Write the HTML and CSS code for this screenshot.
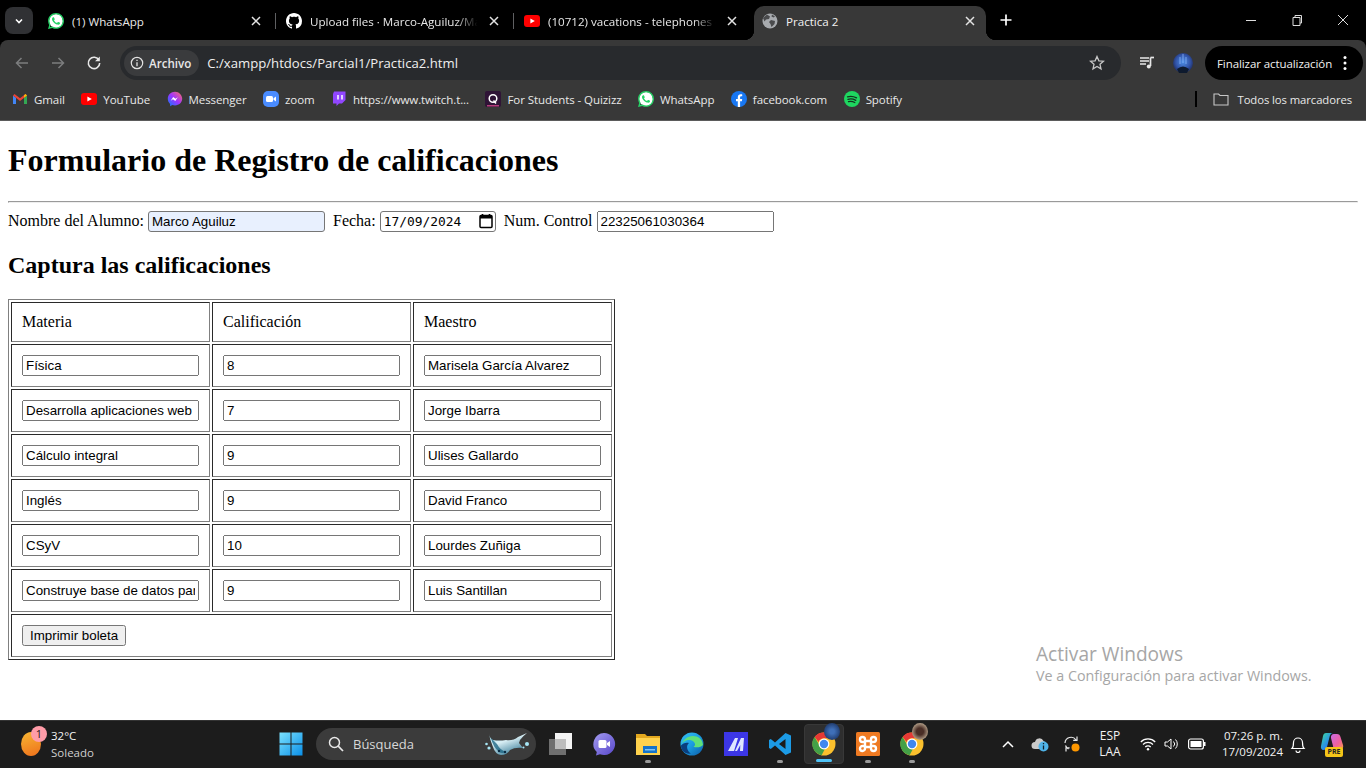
FILE: index.html
```html
<!DOCTYPE html>
<html lang="es">
<head>
<meta charset="utf-8">
<title>Practica 2</title>
<link rel="stylesheet" href="styles.css">
</head>
<body>
<svg class="defs" aria-hidden="true">
  <symbol id="wa" viewBox="0 0 24 24"><circle cx="12" cy="12" r="10.5" fill="#fff"/><path fill="#25d366" d="M17.472 14.382c-.297-.149-1.758-.867-2.03-.967-.273-.099-.471-.148-.67.15-.197.297-.767.966-.94 1.164-.173.199-.347.223-.644.075-.297-.15-1.255-.463-2.39-1.475-.883-.788-1.48-1.761-1.653-2.059-.173-.297-.018-.458.13-.606.134-.133.298-.347.446-.52.149-.174.198-.298.298-.497.099-.198.05-.371-.025-.52-.075-.149-.669-1.612-.916-2.207-.242-.579-.487-.5-.669-.51-.173-.008-.371-.01-.57-.01-.198 0-.52.074-.792.372-.272.297-1.04 1.016-1.04 2.479 0 1.462 1.065 2.875 1.213 3.074.149.198 2.096 3.2 5.077 4.487.709.306 1.262.489 1.694.625.712.227 1.36.195 1.871.118.571-.085 1.758-.719 2.006-1.413.248-.694.248-1.289.173-1.413-.074-.124-.272-.198-.57-.347m-5.421 7.403h-.004a9.87 9.87 0 01-5.031-1.378l-.361-.214-3.741.982.998-3.648-.235-.374a9.86 9.86 0 01-1.51-5.26c.001-5.45 4.436-9.885 9.888-9.885 2.64 0 5.122 1.03 6.988 2.898a9.825 9.825 0 012.893 6.994c-.003 5.45-4.437 9.884-9.885 9.884m8.413-18.297A11.815 11.815 0 0012.05 0C5.495 0 .16 5.335.157 11.892c0 2.096.547 4.142 1.588 5.945L.057 24l6.305-1.654a11.882 11.882 0 005.683 1.448h.005c6.554 0 11.89-5.335 11.893-11.893a11.821 11.821 0 00-3.48-8.413z"/></symbol>
  <symbol id="yt" viewBox="0 0 16 16"><rect x="0" y="2" width="16" height="12" rx="3" fill="#f00"/><path d="M6.4 5.4v5.2L10.8 8z" fill="#fff"/></symbol>
  <symbol id="close" viewBox="0 0 10 10"><path d="M1 1l8 8M9 1l-8 8" stroke="#e3e3e3" stroke-width="1.5" fill="none"/></symbol>
  <symbol id="chrome" viewBox="0 0 24 24">
    <circle cx="12" cy="12" r="11.5" fill="#fbc02d"/>
    <path d="M12 .5a11.5 11.5 0 0 1 9.96 5.75H12a5.75 5.75 0 0 0-5.4 3.7L2.6 4.9A11.5 11.5 0 0 1 12 .5z" fill="#e53935"/>
    <path d="M2.6 4.9l5 8.6a5 5 0 0 0 5.4 3.3l-3.4 6.4A11.5 11.5 0 0 1 2.6 4.9z" fill="#43a047"/>
    <circle cx="12" cy="12" r="5.4" fill="#fff"/><circle cx="12" cy="12" r="4.2" fill="#3f87ee"/>
  </symbol>
</svg>

<div class="browser">
  <div class="tabstrip">
    <div class="tabmenu"><svg class="ico10" viewBox="0 0 10 10"><path d="M2 3.5l3 3 3-3" stroke="#fff" stroke-width="1.6" fill="none"/></svg></div>
    <div class="tab">
      <svg class="fav"><use href="#wa"/></svg>
      <span class="tab-title">(1) WhatsApp</span>
      <svg class="tab-close"><use href="#close"/></svg>
      <i class="tab-sep"></i>
    </div>
    <div class="tab">
      <svg class="fav" viewBox="0 0 16 16"><path fill="#fff" d="M8 0C3.58 0 0 3.58 0 8c0 3.54 2.29 6.53 5.47 7.59.4.07.55-.17.55-.38 0-.19-.01-.82-.01-1.49-2.01.37-2.53-.49-2.69-.94-.09-.23-.48-.94-.82-1.13-.28-.15-.68-.52-.01-.53.63-.01 1.08.58 1.23.82.72 1.21 1.87.87 2.33.66.07-.52.28-.87.51-1.07-1.78-.2-3.64-.89-3.64-3.95 0-.87.31-1.59.82-2.15-.08-.2-.36-1.02.08-2.12 0 0 .67-.21 2.2.82.64-.18 1.32-.27 2-.27.68 0 1.36.09 2 .27 1.53-1.04 2.2-.82 2.2-.82.44 1.1.16 1.92.08 2.12.51.56.82 1.27.82 2.15 0 3.07-1.87 3.75-3.65 3.95.29.25.54.73.54 1.48 0 1.07-.01 1.93-.01 2.2 0 .21.15.46.55.38A8.013 8.013 0 0016 8c0-4.42-3.58-8-8-8z"/></svg>
      <span class="tab-title fade">Upload files · Marco-Aguiluz/Marco-Aguiluz</span>
      <svg class="tab-close"><use href="#close"/></svg>
      <i class="tab-sep"></i>
    </div>
    <div class="tab">
      <svg class="fav"><use href="#yt"/></svg>
      <span class="tab-title fade">(10712) vacations - telephones (official)</span>
      <svg class="tab-close"><use href="#close"/></svg>
    </div>
    <div class="tab tab-active">
      <svg class="fav" viewBox="0 0 16 16"><circle cx="8" cy="8" r="7.5" fill="#a8abaf"/><path d="M5 1.5l3 2-1 2.5-3 .5-1.5 2L1 5zM9 7l4 1-.5 3-3 3-1-3-1.500-2zM10 1.500l3 2-1.500 1-2-1z" fill="#4a4b4d"/></svg>
      <span class="tab-title">Practica 2</span>
      <svg class="tab-close"><use href="#close"/></svg>
    </div>
    <svg class="newtab" viewBox="0 0 12 12"><path d="M6 .5v11M.5 6h11" stroke="#fff" stroke-width="1.700"/></svg>
    <div class="winctl">
      <svg class="win-btn" viewBox="0 0 46 12"><path d="M18 6.500h10" stroke="#ddd"/></svg>
      <svg class="win-btn" viewBox="0 0 46 12"><path d="M19 3.500h7v8h-7zM21 3.500v-2h6.500v7.500H26" stroke="#ddd" fill="none"/></svg>
      <svg class="win-btn" viewBox="0 0 46 12"><path d="M18 1l10 10M28 1L18 11" stroke="#ddd" fill="none"/></svg>
    </div>
  </div>

  <div class="toolbar">
    <svg class="nav" viewBox="0 0 16 16"><path d="M14 8H2.500M7.500 3l-5 5 5 5" stroke="#7c7d7e" stroke-width="1.500" fill="none"/></svg>
    <svg class="nav" viewBox="0 0 16 16"><path d="M2 8h11.500M8.500 3l5 5-5 5" stroke="#7c7d7e" stroke-width="1.500" fill="none"/></svg>
    <svg class="nav" viewBox="0 0 16 16"><path d="M13 5.200A5.700 5.700 0 1 0 13.700 8" stroke="#e8e8e8" stroke-width="1.600" fill="none"/><path d="M13.800 1.500v4.700H9.100z" fill="#e8e8e8"/></svg>
    <div class="omnibox">
      <div class="chip">
        <svg class="ico14" viewBox="0 0 14 14"><circle cx="7" cy="7" r="5.700" stroke="#e3e3e3" stroke-width="1.200" fill="none"/><path d="M7 6.200v4M7 3.700v1.300" stroke="#e3e3e3" stroke-width="1.300"/></svg>
        <span>Archivo</span>
      </div>
      <span class="url">C:/xampp/htdocs/Parcial1/Practica2.html</span>
      <svg class="star" viewBox="0 0 16 16"><path d="M8 1.500l1.900 4.300 4.600.4-3.500 3.100 1 4.600L8 11.500l-4 2.400 1-4.600L1.500 6.200l4.600-.4z" stroke="#c7c7c7" stroke-width="1.300" fill="none"/></svg>
    </div>
    <svg class="media" viewBox="0 0 16 16"><path d="M1 3h9M1 6h9M1 9h6M1 12h0" stroke="#e8e8e8" stroke-width="1.500"/><path d="M11.500 2.500v8.500" stroke="#e8e8e8" stroke-width="1.700"/><path d="M11.500 2.500H15" stroke="#e8e8e8" stroke-width="1.700"/><circle cx="9.800" cy="11.500" r="2" fill="#e8e8e8"/></svg>
    <svg class="avatar" viewBox="0 0 20 20"><defs><radialGradient id="av" cx=".5" cy=".45" r=".6"><stop offset="0" stop-color="#4d8fe8"/><stop offset=".6" stop-color="#3254a8"/><stop offset="1" stop-color="#1b2450"/></radialGradient></defs><circle cx="10" cy="10" r="10" fill="url(#av)"/><path d="M4 16q6-5 12 0l-2 4H6z" fill="#0e1a2e"/><path d="M10 1v9M7 4v7M13 4v7" stroke="#8ab4f8" stroke-width=".8"/></svg>
    <div class="update">
      <span>Finalizar actualización</span>
      <svg class="dots" viewBox="0 0 4 16"><circle cx="2" cy="2.500" r="1.500" fill="#fff"/><circle cx="2" cy="8" r="1.500" fill="#fff"/><circle cx="2" cy="13.500" r="1.500" fill="#fff"/></svg>
    </div>
  </div>

  <div class="bookmarks">
    <div class="bm"><svg class="fav" viewBox="0 0 16 16"><path d="M1 13V4.500l3 2.300V13z" fill="#4285f4"/><path d="M12 13V6.800l3-2.300V13z" fill="#34a853"/><path d="M1 4.500L2.500 3 8 7.200 13.500 3 15 4.500 8 10z" fill="#ea4335"/><path d="M12 6.800V4.200L13.500 3 15 4.500z" fill="#fbbc04"/></svg><span>Gmail</span></div>
    <div class="bm"><svg class="fav"><use href="#yt"/></svg><span>YouTube</span></div>
    <div class="bm"><svg class="fav" viewBox="0 0 16 16"><defs><linearGradient id="ms" x1="0" y1="1" x2="1" y2="0"><stop offset="0" stop-color="#0a7cff"/><stop offset=".5" stop-color="#a033ff"/><stop offset="1" stop-color="#ff6f61"/></linearGradient></defs><path d="M8 .8C3.900.8.800 3.800.800 7.800c0 2.100.9 3.900 2.300 5.100v2.300l2.200-1.200c.8.300 1.700.4 2.700.4 4.100 0 7.200-3 7.200-6.600S12.100.8 8 .8z" fill="url(#ms)"/><path d="M3.700 9.800l2.500-3.900 2.300 1.800 2.300-1.500-2.500 3.900L6 8.300z" fill="#fff"/></svg><span>Messenger</span></div>
    <div class="bm"><svg class="fav" viewBox="0 0 16 16"><rect width="16" height="16" rx="5" fill="#4a8cff"/><rect x="3" y="5" width="7" height="6" rx="1.500" fill="#fff"/><path d="M10.500 7.200L13 5.500v5l-2.500-1.700z" fill="#fff"/></svg><span>zoom</span></div>
    <div class="bm"><svg class="fav" viewBox="0 0 16 16"><path d="M3 .5h11.500V9l-3.500 3.500H8L5.500 15v-2.500H2V3z" fill="#9146ff"/><path d="M7 4v4.500M11 4v4.500" stroke="#fff" stroke-width="1.500"/></svg><span>https://www.twitch.t...</span></div>
    <div class="bm"><svg class="fav" viewBox="0 0 16 16"><rect width="16" height="16" rx="2" fill="#2f1436"/><circle cx="8" cy="7.500" r="3.800" stroke="#fff" stroke-width="1.500" fill="none"/><path d="M8.500 9.500l2.500 3" stroke="#fff" stroke-width="1.500"/><path d="M2 14.800h12" stroke="#d9488e" stroke-width="1.200"/></svg><span>For Students - Quizizz</span></div>
    <div class="bm"><svg class="fav"><use href="#wa"/></svg><span>WhatsApp</span></div>
    <div class="bm"><svg class="fav" viewBox="0 0 16 16"><circle cx="8" cy="8" r="8" fill="#1877f2"/><path d="M6.800 16V10.300H5V8h1.800V6.300c0-2 1.200-3 2.900-3 .8 0 1.500.1 1.500.1v1.900h-.9c-1 0-1.200.6-1.200 1.200V8h2.100l-.3 2.300H9.100V16z" fill="#fff"/></svg><span>facebook.com</span></div>
    <div class="bm"><svg class="fav" viewBox="0 0 16 16"><circle cx="8" cy="8" r="8" fill="#1ed760"/><path d="M3.500 5.800q4.500-1.300 9 1M4 8.300q4-1 7.800 1M4.500 10.700q3.200-.8 6.300.8" stroke="#14321f" stroke-width="1.300" fill="none" stroke-linecap="round"/></svg><span>Spotify</span></div>
    <i class="bm-sep"></i>
    <div class="bm bm-all"><svg class="fav" viewBox="0 0 16 16"><path d="M1 3h4.500L7 4.500h8v9.500H1z" stroke="#c7c7c7" stroke-width="1.100" fill="none"/></svg><span>Todos los marcadores</span></div>
  </div>
</div>

<main class="page">
  <h1>Formulario de Registro de calificaciones</h1>
  <hr>
  <form>
    <div>
      Nombre del Alumno: <input class="txt autofilled" type="text" value="Marco Aguiluz"> &nbsp;Fecha: <span class="date-field"><input class="date-text" type="text" value="17/09/2024"><svg class="date-ico" viewBox="0 0 14 16"><path d="M3.500 1v2M10.500 1v2" stroke="#000" stroke-width="1.600"/><rect x="1" y="2.500" width="12" height="12" rx="1" stroke="#000" stroke-width="1.500" fill="none"/><rect x="1" y="2.500" width="12" height="3" fill="#000"/></svg></span> &nbsp;Num. Control <input class="txt" type="text" value="22325061030364">
    </div>
    <h2>Captura las calificaciones</h2>
    <table class="grades">
      <tr><td>Materia</td><td>Calificación</td><td>Maestro</td></tr>
      <tr><td><input class="txt" value="Física"></td><td><input class="txt" value="8"></td><td><input class="txt" value="Marisela García Alvarez"></td></tr>
      <tr><td><input class="txt" value="Desarrolla aplicaciones web"></td><td><input class="txt" value="7"></td><td><input class="txt" value="Jorge Ibarra"></td></tr>
      <tr><td><input class="txt" value="Cálculo integral"></td><td><input class="txt" value="9"></td><td><input class="txt" value="Ulises Gallardo"></td></tr>
      <tr><td><input class="txt" value="Inglés"></td><td><input class="txt" value="9"></td><td><input class="txt" value="David Franco"></td></tr>
      <tr><td><input class="txt" value="CSyV"></td><td><input class="txt" value="10"></td><td><input class="txt" value="Lourdes Zuñiga"></td></tr>
      <tr><td><input class="txt" value="Construye base de datos para aplicaciones"></td><td><input class="txt" value="9"></td><td><input class="txt" value="Luis Santillan"></td></tr>
      <tr><td colspan="3"><input class="btn" type="button" value="Imprimir boleta"></td></tr>
    </table>
  </form>
  <div class="watermark">
    <div class="wm-title">Activar Windows</div>
    <div class="wm-sub">Ve a Configuración para activar Windows.</div>
  </div>
</main>

<footer class="taskbar">
  <div class="weather">
    <div class="sun"><b class="badge">1</b></div>
    <div class="wx-text"><span>32°C</span><span class="wx-sub">Soleado</span></div>
  </div>
  <div class="apps">
    <div class="app app-win"><svg class="ico24" viewBox="0 0 24 24"><defs><linearGradient id="w" x1="0" y1="0" x2="1" y2="1"><stop offset="0" stop-color="#7be2ff"/><stop offset="1" stop-color="#0a8fe8"/></linearGradient></defs><path d="M.5.500h11v11H.5zM12.500.500h11v11h-11zM.5 12.500h11v11H.5zM12.500 12.500h11v11h-11z" fill="url(#w)"/></svg></div>
    <div class="search">
      <svg class="ico16" viewBox="0 0 16 16"><circle cx="6.500" cy="6.500" r="5" stroke="#e8e8e8" stroke-width="1.500" fill="none"/><path d="M10.200 10.200L15 15" stroke="#e8e8e8" stroke-width="1.700"/></svg>
      <span>Búsqueda</span>
      <svg class="manta" viewBox="0 0 48 26"><defs><linearGradient id="mt" x1="0" y1="0" x2=".6" y2="1"><stop offset="0" stop-color="#9fe0f2"/><stop offset=".45" stop-color="#d8eef4"/><stop offset="1" stop-color="#3d7f9a"/></linearGradient></defs><path d="M5 3q1 5 4 6 6 1 13 0 7 1 12-3l9-4q-4 3-7 7l-1 3 4 5q-8-1-13 2-3 5-9 5-6-1-8-8-3-7-4-13z" fill="url(#mt)"/><path d="M7 7q2 9 8 14 3 2 7 0-6-2-9-8z" fill="#15607f" opacity=".75"/><circle cx="15" cy="20" r="1.200" fill="#0a2c44"/><circle cx="21" cy="21" r="1.200" fill="#0a2c44"/><circle cx="2.500" cy="13" r="1.300" fill="#a7e6f5"/><circle cx="5" cy="17" r="1.600" fill="#a7e6f5"/><circle cx="43" cy="13" r="2" fill="#a7e6f5"/><circle cx="39.500" cy="16.500" r="1" fill="#a7e6f5"/></svg>
    </div>
    <div class="app app-tv"><svg class="ico24" viewBox="0 0 24 24"><rect x="1" y="7" width="17" height="16" fill="#6f6f6f"/><rect x="7" y="1" width="17" height="16" fill="#f3f3f3"/><rect x="7" y="7" width="11" height="10" fill="#bdbdbd"/></svg></div>
    <div class="app"><svg class="ico24" viewBox="0 0 24 24"><defs><linearGradient id="ch" x1="0" y1="0" x2="1" y2="1"><stop offset="0" stop-color="#a39bf0"/><stop offset="1" stop-color="#5746c9"/></linearGradient></defs><path d="M12 1a11 11 0 1 1-4 21.200L4 23.500l.8-3.600A11 11 0 0 1 12 1z" fill="url(#ch)"/><rect x="6.500" y="8" width="8" height="8" rx="1.500" fill="#fff"/><path d="M15 11l3-2v6l-3-2z" fill="#fff"/></svg></div>
    <div class="app app-run"><svg class="ico24" viewBox="0 0 24 24"><path d="M0 2h9l2 2h13v4H0z" fill="#e3a81f"/><rect y="6" width="24" height="17" fill="#ffd24d"/><rect x="7" y="14" width="14" height="7" fill="#1573c9"/><rect x="9" y="17" width="10" height="1.500" fill="#7fc4f5"/></svg></div>
    <div class="app"><svg class="ico24" viewBox="0 0 24 24"><defs><linearGradient id="ed" x1="0" y1="0" x2="1" y2="1"><stop offset="0" stop-color="#35c1f1"/><stop offset=".5" stop-color="#1b9de2"/><stop offset="1" stop-color="#0c59a4"/></linearGradient></defs><circle cx="12" cy="12" r="11.500" fill="url(#ed)"/><path d="M23 13c-.5-6-5-9-10-9C7 4 3 8 1 13c1-3 5-5 8-5s6 2 6 4.500c0 1-.6 1.500-1.500 2.200 3 .9 7 1 9.500-1.700z" fill="#5fe07a"/><path d="M9 11c-3 2-2.500 8 2 10.500-6 1-10-3-10-8 1.500-2 5-3.500 8-2.500z" fill="#0a3e7e"/></svg></div>
    <div class="app"><svg class="ico24" viewBox="0 0 24 24"><rect width="24" height="24" fill="#3c36e6"/><path d="M4 19L11 6h3L10 19zM11 19l6-13h3l-1 13h-3l.3-6L13 19z" fill="#dfe6ff"/></svg></div>
    <div class="app app-run"><svg class="ico24" viewBox="0 0 24 24"><path d="M17.500 1L23 3.500v17L17.500 23 7 13.500 2.800 17 1 16V8l1.800-1L7 10.500zM17.500 7L11 12l6.500 5z" fill="#1c9be6"/></svg></div>
    <div class="app app-active"><span class="chrome-wrap"><svg class="ico24"><use href="#chrome"/></svg><b class="mini mini-blue"></b></span></div>
    <div class="app app-run"><svg class="ico24" viewBox="0 0 24 24"><rect width="24" height="24" rx="1.500" fill="#ef7a22"/><path d="M9 7.500a2.500 2.500 0 1 0-2.500 2.500H9v4H6.500A2.500 2.500 0 1 0 9 16.500V15h6v1.500a2.500 2.500 0 1 0 2.500-2.500H15v-4h2.500A2.500 2.500 0 1 0 15 7.500V9H9z" fill="none" stroke="#fff" stroke-width="2.400"/></svg></div>
    <div class="app app-run"><span class="chrome-wrap"><svg class="ico24"><use href="#chrome"/></svg><b class="mini mini-brown"></b></span></div>
  </div>
  <div class="tray">
    <svg class="tray-chev" viewBox="0 0 12 8"><path d="M1 7l5-5 5 5" stroke="#fff" stroke-width="1.500" fill="none"/></svg>
    <svg class="tray-cloud" viewBox="0 0 18 16"><path d="M4 13a3.500 3.500 0 0 1 0-7 4.500 4.500 0 0 1 8.500-1A3.500 3.500 0 0 1 14 11v2z" fill="#c9c9c9"/><circle cx="12.500" cy="10.500" r="5" fill="#4fb3e8"/><path d="M12.500 9.500v4M12.500 7v1.200" stroke="#10202a" stroke-width="1.300"/></svg>
    <svg class="tray-sync" viewBox="0 0 18 18"><path d="M2 8a6 6 0 0 1 11-3M14 1.500v3.800h-3.800M2.500 10.500a6 6 0 0 0 3 3.500M3 16.500v-3.600h3.600" stroke="#e8e8e8" stroke-width="1.200" fill="none"/><circle cx="12.500" cy="12.500" r="4" fill="#ff9800"/></svg>
    <div class="lang"><span>ESP</span><span>LAA</span></div>
    <svg class="tray-wifi" viewBox="0 0 16 14"><path d="M.8 5a10 10 0 0 1 14.400 0M3 7.500a7 7 0 0 1 10 0M5.300 10a3.700 3.700 0 0 1 5.400 0" stroke="#fff" stroke-width="1.200" fill="none"/><circle cx="8" cy="12.300" r="1.200" fill="#fff"/></svg>
    <svg class="tray-vol" viewBox="0 0 16 14"><path d="M1 5v4h2.500L7 12V2L3.500 5z" stroke="#fff" fill="none"/><path d="M9.500 4.500a3.500 3.500 0 0 1 0 5M11.500 2.500a6.500 6.500 0 0 1 0 9" stroke="#fff" fill="none"/></svg>
    <svg class="tray-bat" viewBox="0 0 18 12"><rect x=".6" y="1" width="14.800" height="10" rx="2" stroke="#fff" stroke-width="1.200" fill="none"/><rect x="2.500" y="3" width="11" height="6" fill="#fff"/><rect x="16" y="4" width="1.500" height="4" fill="#fff"/></svg>
    <div class="clock"><span>07:26 p. m.</span><span>17/09/2024</span></div>
    <svg class="tray-bell" viewBox="0 0 16 18"><path d="M2 13.500c1.500-1.500 1.500-3 1.500-6a4.500 4.500 0 0 1 9 0c0 3 0 4.500 1.500 6zM6 15.500a2 2 0 0 0 4 0" stroke="#fff" stroke-width="1.200" fill="none"/></svg>
    <span class="copilot"><svg class="ico24" viewBox="0 0 24 24"><defs><linearGradient id="cpa" x1="0" y1="0" x2="1" y2="1"><stop offset="0" stop-color="#3ddc97"/><stop offset=".55" stop-color="#2a8fe8"/><stop offset="1" stop-color="#3a5ad8"/></linearGradient><linearGradient id="cpb" x1="0" y1="0" x2="1" y2="1"><stop offset="0" stop-color="#c86ae8"/><stop offset=".6" stop-color="#f0609a"/><stop offset="1" stop-color="#f7a13c"/></linearGradient></defs><path d="M14 2h3c2 0 3 1 3.500 3L23 13c.8 3-1 5-3.500 5H14l-3-12c-.5-2 1-4 3-4z" fill="url(#cpb)"/><path d="M6 1h7c-2 0-3 2-3.500 4L7 15c-.5 2-1.500 3-3.500 3C1.500 18 .5 16 1 14L3 4c.4-2 1.500-3 3-3z" fill="url(#cpa)"/></svg><b class="pre">PRE</b></span>
  </div>
</footer>
</body>
</html>
```

FILE: styles.css
```css
* { box-sizing: border-box; }
html, body { margin: 0; height: 100%; overflow: hidden; }
body {
  display: flex;
  flex-direction: column;
  height: 768px;
  background: #fff;
  color: #000;
  font-family: "Liberation Serif", serif;
  font-size: 16px;
}
.defs { width: 0; height: 0; position: absolute; }

/* Browser chrome */
.browser {
  flex: none;
  height: 121px;
  background: #000;
  font-family: "Open Sans", "Noto Sans", sans-serif;
  font-size: 11.6px;
  color: #e8e8e8;
}
.tabstrip { display: flex; align-items: flex-start; height: 40px; position: relative; }
.tabmenu {
  flex: none;
  width: 28px;
  height: 27px;
  margin: 7px 7px 0 5px;
  border-radius: 8px;
  background: #303134;
  display: flex;
  align-items: center;
  justify-content: center;
}
.ico10 { width: 10px; height: 10px; }
.tab {
  flex: none;
  width: 238px;
  height: 34px;
  margin-top: 6px;
  padding: 0 14px 4px 8px;
  display: flex;
  align-items: center;
  position: relative;
}
.tab-active {
  width: 232px;
  padding-right: 8px;
  background: #383838;
  border-radius: 10px 10px 0 0;
  color: #f1f1f1;
}
.tab-active::before,
.tab-active::after {
  content: "";
  position: absolute;
  bottom: 0;
  width: 10px;
  height: 10px;
}
.tab-active::before { left: -10px; background: radial-gradient(circle at 0 0, #000 10px, #383838 10.5px); }
.tab-active::after { right: -10px; background: radial-gradient(circle at 100% 0, #000 10px, #383838 10.5px); }
.fav { width: 16px; height: 16px; flex: none; }
.tab-title {
  flex: 1;
  min-width: 0;
  margin: 0 8px;
  white-space: nowrap;
  overflow: hidden;
}
.fade {
  -webkit-mask-image: linear-gradient(90deg, #000 85%, transparent 98%);
  mask-image: linear-gradient(90deg, #000 85%, transparent 98%);
}
.tab-close { width: 10px; height: 10px; flex: none; margin: 0 3px 1px 0; }
.tab-sep { position: absolute; left: 235px; top: 7px; width: 1px; height: 16px; background: #5f6062; }
.newtab { width: 12px; height: 12px; flex: none; margin: 14px 0 0 14px; }
.winctl { margin-left: auto; display: flex; padding-top: 14px; }
.win-btn { width: 46px; height: 12px; flex: none; }

.toolbar {
  height: 40px;
  background: #383838;
  border-radius: 8px 8px 0 0;
  display: flex;
  align-items: center;
  padding: 6px 3px 0 14px;
  position: relative;
}
.nav { width: 16px; height: 16px; flex: none; margin-right: 20px; }
.nav:nth-of-type(3) { margin-right: 18px; }
.omnibox {
  flex: none;
  width: 1001px;
  height: 34px;
  background: #282a2d;
  border-radius: 17px;
  display: flex;
  align-items: center;
  padding: 0 16px 0 4px;
  font-size: 13.15px;
}
.chip {
  display: flex;
  align-items: center;
  gap: 5px;
  height: 26px;
  padding: 0 8px 0 6px;
  border-radius: 13px;
  background: #3a3b3d;
  font-size: 11.6px;
  font-weight: 600;
  color: #e8e8e8;
}
.ico14 { width: 14px; height: 14px; }
.url { margin-left: 8px; color: #f0f0f0; }
.star { width: 16px; height: 16px; margin-left: auto; }
.media { width: 16px; height: 16px; flex: none; margin-left: 18px; }
.avatar { width: 20px; height: 20px; flex: none; margin-left: 18px; }
.update {
  flex: none;
  margin-left: 12px;
  width: 158px;
  height: 34px;
  border-radius: 17px;
  background: #000;
  display: flex;
  align-items: center;
  padding: 0 16px 0 12px;
  color: #f1f1f1;
  font-size: 11.5px;
  letter-spacing: -0.08px;
  white-space: nowrap;
}
.dots { width: 4px; height: 16px; margin-left: auto; }

.bookmarks {
  height: 41px;
  background: #383838;
  border-bottom: 1px solid #5b5b5b;
  display: flex;
  align-items: center;
  padding: 0 14px 2px 12px;
  gap: 16.5px;
  font-size: 11.5px;
  letter-spacing: -0.08px;
}
.bm { display: flex; align-items: center; gap: 6px; white-space: nowrap; color: #e8e8e8; }
.bm-sep { width: 2px; height: 16px; background: #000; margin-left: auto; }
.bm-all { gap: 8px; font-size: 11.3px; }

/* Page content */
.page {
  flex: 1;
  min-height: 0;
  padding: 8px;
  position: relative;
  overflow: hidden;
}
h1 { font-size: 32px; margin: 13.44px 0 21.44px; }
h2 { font-size: 24px; margin: 19.92px 0; }
hr { margin: 8px 0; }
.txt, .btn { font-family: "Liberation Sans", Arial, sans-serif; font-size: 13.333px; }
.txt { width: 177px; }
.autofilled {
  background: #e8f0fe;
  border: 1px solid #767676;
  border-radius: 3px;
  padding: 2px 3px;
}
.date-field {
  display: inline-flex;
  align-items: center;
  width: 116px;
  height: 21px;
  padding: 0 1px 0 3px;
  border: 1px solid #767676;
  border-radius: 3px;
  background: #fff;
  vertical-align: baseline;
}
.date-text {
  flex: 1;
  min-width: 0;
  border: 0;
  padding: 0;
  outline: 0;
  background: transparent;
  font-family: "DejaVu Sans Mono", "Liberation Mono", monospace;
  font-size: 12.9px;
  color: #000;
}
.date-ico { width: 14px; height: 16px; flex: none; margin-right: 1px; }
.grades {
  border: 1px solid #808080;
  border-right-color: #2a2a2a;
  border-bottom-color: #2a2a2a;
  border-spacing: 2px;
  border-collapse: separate;
}
.grades td {
  border: 1px solid #2a2a2a;
  border-right-color: #808080;
  border-bottom-color: #808080;
  padding: 10px;
}
.grades td:not([colspan]) { width: 199px; }
.watermark {
  position: absolute;
  left: 1036px;
  top: 521px;
  color: #a6a6a6;
  font-family: "Open Sans", "Noto Sans", sans-serif;
  pointer-events: none;
}
.wm-title { font-size: 19.1px; line-height: 24px; }
.wm-sub { font-size: 14.3px; line-height: 20px; }

/* Taskbar */
.taskbar {
  flex: none;
  height: 48px;
  background: #1c1c1c;
  border-top: 1px solid #333;
  padding-bottom: 1px;
  display: flex;
  align-items: center;
  color: #f2f2f2;
  font-family: "Open Sans", "Noto Sans", sans-serif;
  font-size: 12px;
}
.weather { width: 269px; flex: none; display: flex; align-items: center; padding-left: 21px; gap: 10px; }
.sun {
  width: 20px;
  height: 24px;
  border-radius: 50%;
  background: linear-gradient(160deg, #f7b733, #ee6f1b);
  position: relative;
}
.badge {
  position: absolute;
  left: 10px;
  top: -6px;
  width: 16px;
  height: 16px;
  border-radius: 50%;
  background: #ff9ca8;
  color: #2a1a1a;
  font-size: 11px;
  font-weight: 400;
  line-height: 16px;
  text-align: center;
}
.wx-text { display: flex; flex-direction: column; line-height: 17px; font-size: 11.5px; }
.wx-sub { color: #cfcfcf; }
.apps { display: flex; align-items: center; flex: none; }
.app {
  width: 44px;
  height: 40px;
  flex: none;
  display: flex;
  align-items: center;
  justify-content: center;
  position: relative;
}
.ico24 { width: 24px; height: 24px; display: block; }
.ico16 { width: 16px; height: 16px; flex: none; }
.app-run::after {
  content: "";
  position: absolute;
  left: 19px;
  bottom: 1px;
  width: 6px;
  height: 3px;
  border-radius: 2px;
  background: #9a9a9a;
}
.app-active {
  width: 40px;
  margin: 0 2px;
  background: #2e2e2e;
  border-radius: 4px;
  border: 1px solid #383838;
}
.app-active::after {
  content: "";
  position: absolute;
  left: 11px;
  bottom: 1px;
  width: 16px;
  height: 3px;
  border-radius: 2px;
  background: #4fc3f7;
}
.search {
  width: 220px;
  height: 32px;
  margin: 0 2px 0 3px;
  flex: none;
  border-radius: 16px;
  background: #3b3b3b;
  display: flex;
  align-items: center;
  padding: 0 4px 0 12px;
  gap: 9px;
  font-size: 13px;
  color: #d8d8d8;
}
.manta { width: 48px; height: 26px; margin-left: auto; flex: none; }
.chrome-wrap { position: relative; display: block; width: 24px; height: 24px; }
.mini { position: absolute; left: 12px; top: -9px; width: 16px; height: 17px; border-radius: 50%; }
.mini-blue { background: radial-gradient(circle, #3f6fb8 20%, #10224a); }
.mini-brown { background: radial-gradient(circle, #4a2e26 30%, #b9a58e 75%, #5a4438); }
.tray { flex: none; display: flex; align-items: center; margin-left: 68px; }
.tray-chev { width: 12px; height: 8px; flex: none; }
.tray-cloud { width: 18px; height: 16px; flex: none; margin-left: 17px; }
.tray-sync { width: 18px; height: 18px; flex: none; margin-left: 14px; }
.lang { display: flex; flex-direction: column; align-items: center; width: 28px; margin-left: 15px; font-size: 12px; line-height: 16px; }
.tray-wifi { width: 16px; height: 14px; flex: none; margin-left: 16px; }
.tray-vol { width: 16px; height: 14px; flex: none; margin-left: 8px; }
.tray-bat { width: 18px; height: 12px; flex: none; margin-left: 8px; }
.clock { display: flex; flex-direction: column; align-items: flex-end; width: 64px; margin-left: 13px; font-size: 11.5px; line-height: 16px; white-space: nowrap; }
.tray-bell { width: 16px; height: 18px; flex: none; margin-left: 7px; }
.copilot { position: relative; width: 24px; height: 24px; margin-left: 14px; }
.pre {
  position: absolute;
  left: 5px;
  top: 15px;
  width: 18px;
  height: 10px;
  border-radius: 2px;
  background: #f5c518;
  color: #222;
  font-size: 7px;
  line-height: 10px;
  text-align: center;
}
```
